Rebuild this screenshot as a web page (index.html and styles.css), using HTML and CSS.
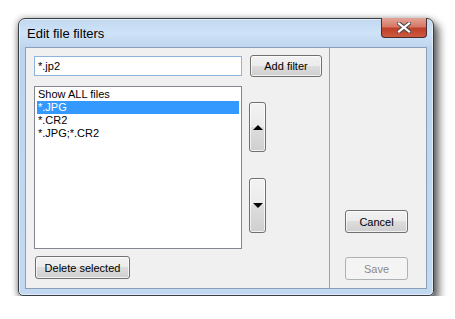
FILE: index.html
```html
<!DOCTYPE html>
<html>
<head>
	<meta charset="UTF-8">
	<title>Edit file filters</title>
	<link rel="stylesheet" href="styles.css">
</head>
<body>
	<div class="window">
		<div class="titlebar">
			<span class="title">Edit file filters</span>
			<div class="close">
				<svg width="14" height="11" viewBox="0 0 14 11">
					<path d="M2 1.5 L12 9.5 M12 1.5 L2 9.5" stroke="#4a4a4a" stroke-width="4.2" stroke-linecap="square"/>
					<path d="M2 1.5 L12 9.5 M12 1.5 L2 9.5" stroke="#fff" stroke-width="2.2" stroke-linecap="square"/>
				</svg>
			</div>
		</div>
		<div class="client">
			<div class="left">
				<div class="row-top">
					<input class="textbox" type="text" value="*.jp2">
					<button class="btn btn-add">Add filter</button>
				</div>
				<div class="row-list">
					<ul class="listbox">
						<li>Show ALL files</li>
						<li class="selected">*.JPG</li>
						<li>*.CR2</li>
						<li>*.JPG;*.CR2</li>
					</ul>
					<div class="arrows">
						<button class="btn btn-up"><span class="tri-up"></span></button>
						<button class="btn btn-down"><span class="tri-down"></span></button>
					</div>
				</div>
				<button class="btn btn-delete">Delete selected</button>
			</div>
			<div class="right">
				<button class="btn btn-side">Cancel</button>
				<button class="btn btn-side disabled">Save</button>
			</div>
		</div>
	</div>
</body>
</html>
```

FILE: styles.css
```css
*{
	box-sizing:border-box;
}

body{
	margin:0;
	padding:18px 0 0 18px;
	background:#fff;
	font-family:"Liberation Sans", Arial, sans-serif;
	font-size:11px;
	color:#000;
}

.window{
	width:416px;
	height:278px;
	border:1px solid #3a3f46;
	border-radius:7px 7px 5px 5px;
	background:linear-gradient(180deg, #c0d8f0 0px, #cfe3f8 14px, #bcd5ee 29px, #c2d9f1 100%);
	box-shadow:4px 6px 9px 1px rgba(0,0,0,0.6), -1px 0 6px rgba(0,0,0,0.3), inset 0 0 0 1px rgba(255,255,255,0.5);
	padding:0 6px 6px 6px;
	display:flex;
	flex-direction:column;
}

.titlebar{
	height:28px;
	display:flex;
	justify-content:space-between;
	align-items:flex-start;
}

.title{
	font-size:13px;
	margin:7px 0 0 2px;
	color:#000;
}

.close{
	width:46px;
	height:20px;
	margin-top:-1px;
	border:1px solid #4a2d2d;
	border-top:0;
	border-radius:0 0 4px 4px;
	background:linear-gradient(180deg, #e2a396 0%, #d57a66 45%, #c0402a 55%, #cc5a3e 100%);
	display:flex;
	align-items:center;
	justify-content:center;
}

.client{
	flex:1;
	border:1px solid #8aa0b8;
	background:#f0f0f0;
	display:flex;
}

.left{
	width:304px;
	border-right:1px solid #a0a0a0;
	padding:7px 0 0 8px;
	display:flex;
	flex-direction:column;
}

.row-top{
	display:flex;
	align-items:center;
	gap:8px;
	height:22px;
}

.textbox{
	width:208px;
	height:20px;
	border:1px solid #8eb4dc;
	background:#fff;
	font-family:inherit;
	font-size:11px;
	padding:0 3px;
	outline:none;
}

.btn{
	font-family:inherit;
	font-size:11px;
	color:#000;
	border:1px solid #707070;
	border-radius:3px;
	background:linear-gradient(180deg, #f2f2f2 0%, #ebebeb 50%, #dddddd 50%, #cfcfcf 100%);
	box-shadow:inset 0 0 0 1px rgba(255,255,255,0.7);
	padding:0;
	display:flex;
	align-items:center;
	justify-content:center;
}

.btn-add{
	width:72px;
	height:22px;
}

.row-list{
	display:flex;
	gap:7px;
	margin-top:9px;
}

.listbox{
	width:208px;
	height:163px;
	margin:0;
	padding:1px 2px;
	list-style:none;
	border:1px solid #828790;
	background:#fff;
}

.listbox li{
	height:13px;
	line-height:13px;
	padding-left:1px;
}

.listbox li.selected{
	background:#3399ff;
	color:#fff;
}

.arrows{
	display:flex;
	flex-direction:column;
	padding-top:16px;
	gap:26px;
}

.btn-up{
	width:17px;
	height:50px;
}

.btn-down{
	width:17px;
	height:55px;
}

.tri-up{
	width:0;
	height:0;
	border-left:5px solid transparent;
	border-right:5px solid transparent;
	border-bottom:5px solid #000;
}

.tri-down{
	width:0;
	height:0;
	border-left:5px solid transparent;
	border-right:5px solid transparent;
	border-top:5px solid #000;
}

.btn-delete{
	width:95px;
	height:23px;
	margin:7px 0 0 1px;
}

.right{
	flex:1;
	padding:162px 0 0 15px;
	display:flex;
	flex-direction:column;
	gap:24px;
}

.btn-side{
	width:63px;
	height:23px;
}

.btn.disabled{
	color:#8a8a8a;
	border-color:#adb2b5;
	background:#f4f4f4;
	box-shadow:none;
}
```
